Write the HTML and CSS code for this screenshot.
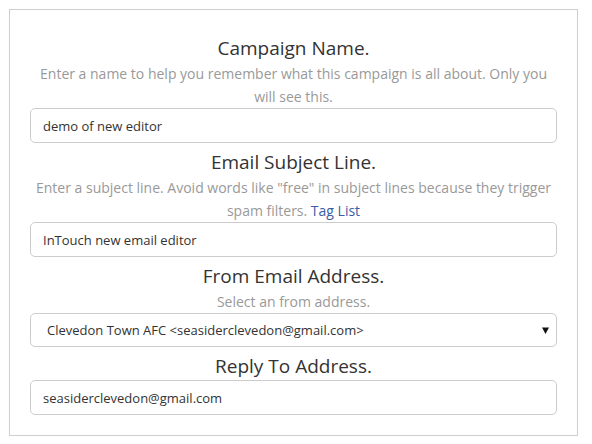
FILE: index.html
```html
<!DOCTYPE html>
<html>
<head>
<meta charset="utf-8">
<link rel="stylesheet" href="styles.css">
</head>
<body>
<div class="panel">
  <div class="field">
    <h2 class="title">Campaign Name.</h2>
    <p class="help">Enter a name to help you remember what this campaign is all about. Only you will see this.</p>
    <input class="control" type="text" value="demo of new editor">
  </div>
  <div class="field">
    <h2 class="title">Email Subject Line.</h2>
    <p class="help">Enter a subject line. Avoid words like "free" in subject lines because they trigger spam filters. <a class="link" href="#">Tag List</a></p>
    <input class="control" type="text" value="InTouch new email editor">
  </div>
  <div class="field">
    <h2 class="title">From Email Address.</h2>
    <p class="help">Select an from address.</p>
    <div class="select-box">
      <select class="select">
        <option>Clevedon Town AFC &lt;seasiderclevedon@gmail.com&gt;</option>
      </select>
      <svg class="caret" width="7" height="7" viewBox="0 0 7 7"><path d="M0 0.5 H7 L3.5 7 Z" fill="#111"/></svg>
    </div>
  </div>
  <div class="field">
    <h2 class="title">Reply To Address.</h2>
    <input class="control" type="text" value="seasiderclevedon@gmail.com">
  </div>
</div>
</body>
</html>
```
FILE: styles.css
```css
html, body {
  margin: 0;
  padding: 0;
  background: #fff;
}
body {
  font-family: "Open Sans", "Liberation Sans", sans-serif;
  padding: 9px 0 0 9px;
}
.panel {
  width: 527px;
  border: 1px solid #cfcfcf;
  padding: 19px 20px 20px 20px;
  display: flex;
  flex-direction: column;
}
.field {
  display: flex;
  flex-direction: column;
}
.title {
  margin: 5px 0 0 0;
  font-size: 19px;
  font-weight: 400;
  line-height: 28px;
  color: #333;
  text-align: center;
}
.help {
  margin: 0;
  font-size: 14px;
  line-height: 23px;
  color: #999;
  text-align: center;
}
.link {
  color: #3b5ba5;
  text-decoration: none;
  line-height: 23px;
}
.control {
  box-sizing: border-box;
  height: 35px;
  width: 100%;
  margin: 0;
  border: 1px solid #ccc;
  border-radius: 5px;
  padding: 0 12px;
  font-family: "Open Sans", "Liberation Sans", sans-serif;
  font-size: 13px;
  color: #333;
  background: #fff;
  outline: none;
}
.select-box {
  box-sizing: border-box;
  height: 34px;
  border: 1px solid #ccc;
  border-radius: 5px;
  display: flex;
  align-items: center;
  padding: 0 7px 0 12px;
}
.select {
  flex: 1;
  appearance: none;
  -webkit-appearance: none;
  border: none;
  background: transparent;
  padding: 0 0 0 4px;
  margin: 0;
  font-family: "Open Sans", "Liberation Sans", sans-serif;
  font-size: 13px;
  color: #333;
  outline: none;
}
.caret {
  display: block;
}
```
